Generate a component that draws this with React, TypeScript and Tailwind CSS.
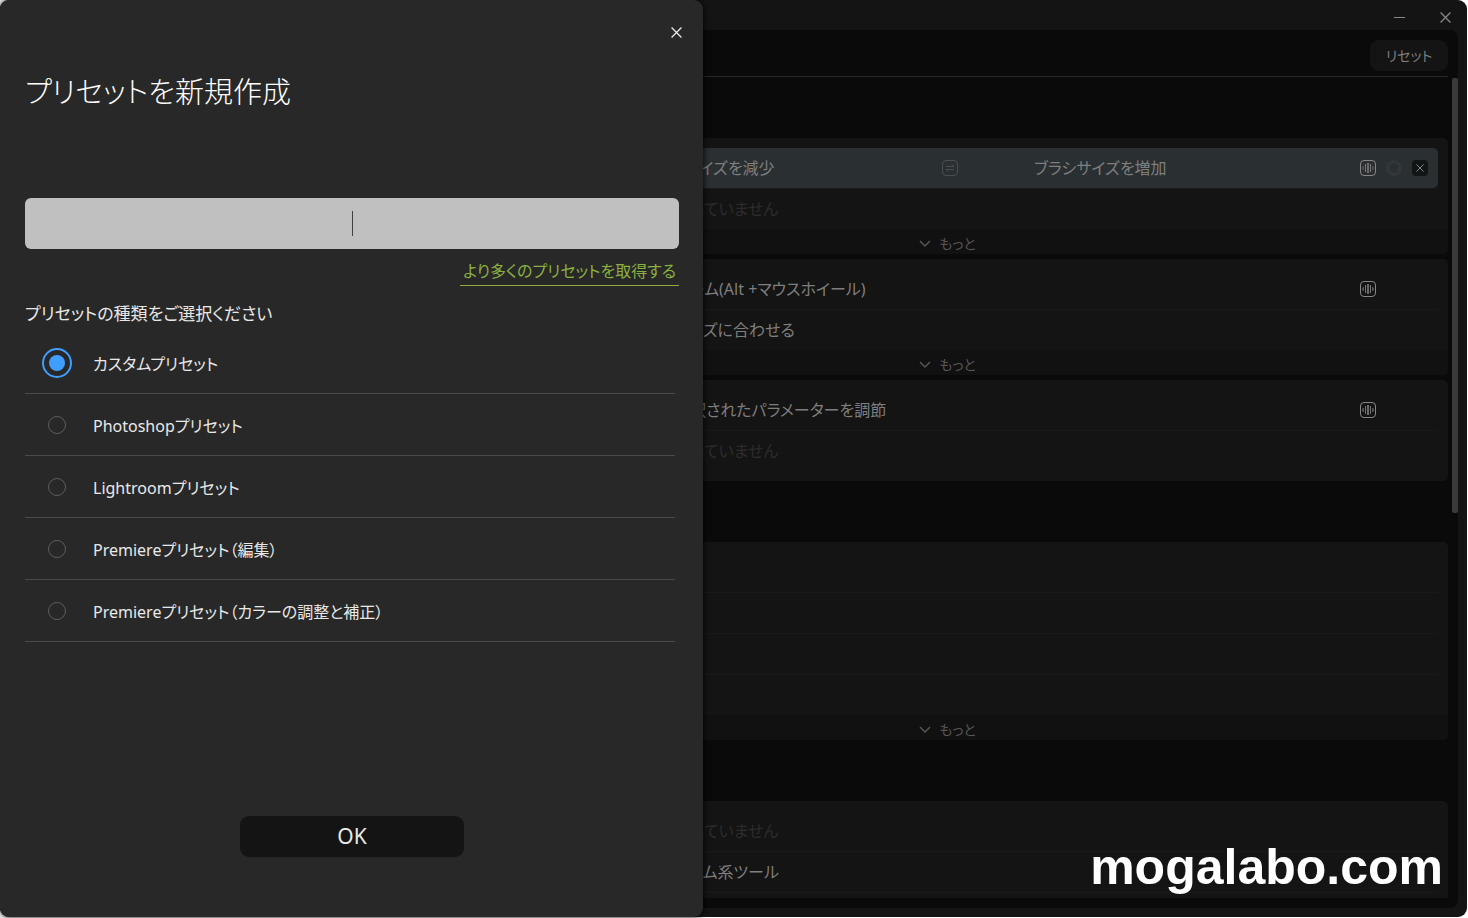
import React, { useState } from 'react';

const presetTypes = [
  'カスタムプリセット',
  'Photoshopプリセット',
  'Lightroomプリセット',
  'Premiereプリセット（編集）',
  'Premiereプリセット（カラーの調整と補正）',
];

const WaveIcon: React.FC = () => (
  <svg width="16" height="16" viewBox="0 0 16 16" fill="none" stroke="#6a6a6a">
    <rect x="0.5" y="0.5" width="15" height="15" rx="3.5" stroke="#868686" />
    <path d="M2.5 6.5v3M3.5 6v4M12.5 6v4M13.5 6.5v3" stroke="#505050" />
    <path d="M5.5 4v8M10.5 4v8" stroke="#767676" />
    <path d="M8 3v10" strokeWidth="2" />
  </svg>
);

const SwapIcon: React.FC = () => (
  <svg width="16" height="16" viewBox="0 0 16 16" fill="none" stroke="#4a4e50">
    <rect x="0.5" y="0.5" width="15" height="15" rx="3.5" />
    <path d="M4 6.5h8L10 4.8M12 9.5H4l2 1.7" />
  </svg>
);

const DialIcon: React.FC = () => (
  <svg width="16" height="16" viewBox="0 0 16 16" fill="none" stroke="#393d3f">
    <circle cx="8" cy="8" r="5.5" />
    <circle cx="8" cy="8" r="7" strokeWidth="1.6" strokeDasharray="1.6 1.15" />
  </svg>
);

const CrossIcon: React.FC<{ size: number }> = ({ size }) => (
  <svg width={size} height={size} viewBox="0 0 10 10" fill="none" stroke="currentColor" strokeWidth="1.2">
    <path d="M0.5 0.5l9 9M9.5 0.5l-9 9" />
  </svg>
);

interface RowProps {
  text?: string;
  right?: string;
  wave?: boolean;
  muted?: boolean;
  active?: boolean;
}

const Row: React.FC<RowProps> = ({ text, right, wave, muted, active }) => (
  <div className="border-b border-[#191919] last:border-b-0">
    <div className={`flex h-10 items-center whitespace-nowrap pl-[185px] ${active ? 'rounded-r-[5px] bg-[#2a2f31]' : ''}`}>
      <span className={`w-[300px] shrink-0 ${muted ? 'text-[#2c2c2c]' : 'text-[#7e7e7e]'}`}>{text}</span>
      {right && (
        <>
          <button type="button" aria-label="入れ替え">
            <SwapIcon />
          </button>
          <span className="ml-[76px] text-[#7e7e7e]">{right}</span>
        </>
      )}
      <div className="ml-auto flex w-[78px] shrink-0 gap-[10px]">
        {wave && (
          <button type="button" aria-label="感度">
            <WaveIcon />
          </button>
        )}
        {active && (
          <>
            <button type="button" aria-label="ダイヤル">
              <DialIcon />
            </button>
            <button type="button" aria-label="削除" className="flex size-4 items-center justify-center rounded-[4px] bg-[#121516] text-[#8a8a8a]">
              <CrossIcon size={8} />
            </button>
          </>
        )}
      </div>
    </div>
  </div>
);

const Card: React.FC<{ rows: RowProps[]; more?: boolean }> = ({ rows, more }) => (
  <div className="shrink-0 overflow-hidden rounded-[5px] bg-[#141414]">
    <div className={`px-[10px] pt-[10px] ${more ? '' : 'pb-[10px]'}`}>
      {rows.map((row, i) => (
        <Row key={i} {...row} />
      ))}
    </div>
    {more && (
      <button type="button" className="flex h-[25px] w-full items-center justify-center gap-2 bg-[#111111] pt-[5px] text-[14px] leading-5 text-[#555555]">
        <svg width="12" height="8" viewBox="0 0 12 8" fill="none" stroke="currentColor" strokeWidth="1.5">
          <path d="M1 1l5 5 5-5" />
        </svg>
        もっと
      </button>
    )}
  </div>
);

const unassigned: RowProps = { text: '設定されていません', muted: true };

const SettingsWindow: React.FC = () => (
  <div className="flex h-full flex-col rounded-[9px] bg-[#141414] pb-[9px] pr-[9px] text-base">
    <div className="flex h-[30px] shrink-0 items-center justify-end gap-[35px] pr-[7px] pt-1 text-[#868686]">
      <button type="button" aria-label="最小化">
        <svg width="11" height="11" viewBox="0 0 11 11" stroke="currentColor">
          <path d="M0 5.5h11" />
        </svg>
      </button>
      <button type="button" aria-label="閉じる">
        <CrossIcon size={11} />
      </button>
    </div>
    <div className="flex min-h-0 grow rounded-r-[8px] bg-[#0a0a0a] pb-[10px]">
      <div className="w-[447px] shrink-0" />
      <div className="flex min-w-0 grow flex-col">
        <div className="mr-[10px] flex h-[47px] shrink-0 items-center justify-end border-b border-[#282828] pt-[5px]">
          <button type="button" className="h-[31px] w-[78px] rounded-[9px] bg-[#141414] text-[14px] text-[#7e7e7e]">
            リセット
          </button>
        </div>
        <div className="flex min-h-0 grow">
          <div className="flex min-w-0 grow flex-col gap-[61px] overflow-hidden pt-[61px]">
            <section className="flex shrink-0 flex-col gap-[5px]">
              <Card rows={[{ text: 'ブラシサイズを減少', right: 'ブラシサイズを増加', wave: true, active: true }, unassigned]} more />
              <Card rows={[{ text: '画面ズーム(Alt +マウスホイール)', wave: true }, { text: '画面サイズに合わせる' }]} more />
              <Card rows={[{ text: '現在選択されたパラメーターを調節', wave: true }, unassigned]} />
            </section>
            <section className="shrink-0">
              <Card rows={[{}, {}, {}, {}]} more />
            </section>
            <section className="shrink-0">
              <Card rows={[unassigned, { text: '各消しゴム系ツール' }, {}]} />
            </section>
          </div>
          <div className="ml-1 w-[6px] shrink-0 pt-px">
            <div className="h-[53%] rounded-[2px] bg-[#3a3a3a]" />
          </div>
        </div>
      </div>
    </div>
  </div>
);

const NewPresetDialog: React.FC = () => {
  const [selected, setSelected] = useState(0);

  return (
    <div
      role="dialog"
      aria-labelledby="dialog-title"
      className="absolute inset-y-0 left-0 flex w-full max-w-[703px] flex-col overflow-hidden rounded-[9px] bg-[#282828] text-[#e8e8e8] shadow-[0_0_6px_#000000]"
    >
      <div className="flex justify-end pr-[15px] pt-5">
        <button type="button" aria-label="閉じる" className="flex size-6 items-center justify-center">
          <CrossIcon size={11} />
        </button>
      </div>
      <div className="flex grow flex-col pl-[25px] pr-6">
        <h1 id="dialog-title" className="mt-7 text-[29px] font-light leading-10 text-white">
          プリセットを新規作成
        </h1>
        <div className="relative mt-[86px]">
          <input
            type="text"
            aria-label="プリセット名"
            className="block h-[51px] w-full rounded-[6px] bg-[#c0c0c0] text-center text-xl text-[#282828] caret-transparent outline-none"
          />
          <span className="absolute left-1/2 top-[13px] h-[25px] w-px bg-[#404040]" />
        </div>
        <a href="#presets" className="mt-[9px] self-end border-b border-[#8fac3c] px-[3px] text-[16px] leading-[27px] text-[#8ab040]">
          より多くのプリセットを取得する
        </a>
        <fieldset className="mt-4">
          <legend className="text-[17px] leading-6">プリセットの種類をご選択ください</legend>
          <div className="mr-1 mt-[6px]">
            {presetTypes.map((label, i) => (
              <label key={label} className="flex h-[62px] items-center gap-[21px] border-b border-[#4a4a4a] pl-[17px] text-[16px]">
                <span className="flex size-[30px] items-center justify-center">
                  <input
                    type="radio"
                    name="preset-type"
                    checked={selected === i}
                    onChange={() => setSelected(i)}
                    className="size-[18px] appearance-none rounded-full border border-[#5c5c5c] checked:size-[30px] checked:border-2 checked:border-[#409eff] checked:bg-[#409eff] checked:bg-clip-content checked:p-[5px]"
                  />
                </span>
                <span className="pt-[3px]">{label}</span>
              </label>
            ))}
          </div>
        </fieldset>
        <button type="button" className="mb-[60px] mt-auto h-[41px] w-[224px] self-center rounded-[9px] bg-[#141414] text-[21px]">
          OK
        </button>
      </div>
    </div>
  );
};

export default function App() {
  return (
    <div className="h-screen bg-white pb-px pr-px font-['Noto_Sans','Noto_Sans_CJK_JP',sans-serif] [font-feature-settings:'palt']">
      <div className="relative h-full">
        <SettingsWindow />
        <NewPresetDialog />
        <p className="absolute bottom-[25px] right-6 font-['Liberation_Sans',sans-serif] text-[50px] font-bold leading-[50px] text-white">
          mogalabo.com
        </p>
      </div>
    </div>
  );
}
